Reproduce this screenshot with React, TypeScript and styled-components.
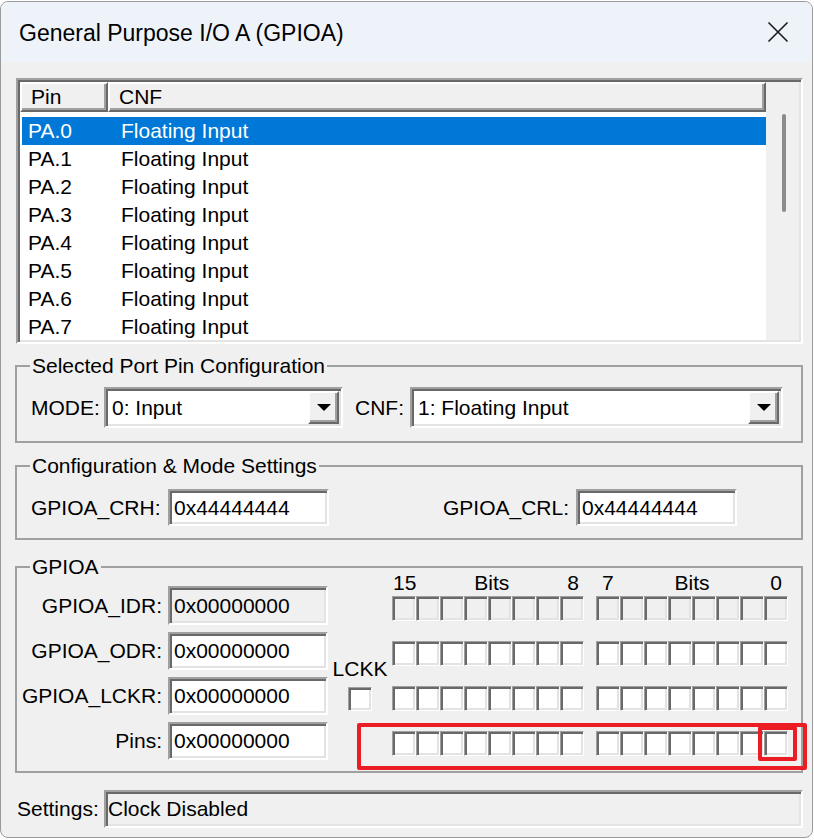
import React from "react";
import styled, { createGlobalStyle } from "styled-components";

const FONT = `"Liberation Sans", Arial, sans-serif`;

const GlobalStyle = createGlobalStyle`
  html, body { margin: 0; padding: 0; background: #ffffff; }
  body { font-family: ${FONT}; }
  * { box-sizing: border-box; }
`;

const Window = styled.div`
  position: relative;
  width: 813px;
  margin-top: 1px;
  border: 1px solid #9a9a9a;
  border-radius: 8px;
  overflow: hidden;
  background: #f0f0f0;
  font-family: ${FONT};
  font-size: 21px;
  color: #000;
`;

const TitleBar = styled.div`
  height: 60px;
  display: flex;
  align-items: center;
  justify-content: space-between;
  padding: 0 23px 0 18px;
  background: #eef3f9;
`;

const Title = styled.div`
  font-size: 23px;
  line-height: 28px;
  padding-top: 2px;
`;

const Body = styled.div`
  display: flex;
  flex-direction: column;
  padding: 16px 9px 9px 14px;
`;

/* ---------- list view ---------- */
const ListBox = styled.div`
  margin-left: 1px;
  height: 266px;
  border: 2px solid;
  border-color: #a0a0a0 #ffffff #ffffff #a0a0a0;
  box-shadow: inset 2px 2px 0 #696969, inset -2px -2px 0 #e3e3e3;
  padding: 2px;
  display: flex;
`;

const ListMain = styled.div`
  flex: 1;
  display: flex;
  flex-direction: column;
  background: #ffffff;
  overflow: hidden;
`;

const Header = styled.div`
  display: flex;
  height: 30px;
  flex: none;
`;

const HeaderCell = styled.div<{ $w?: number }>`
  ${(p) => (p.$w ? `width: ${p.$w}px; flex: none;` : `flex: 1;`)}
  height: 30px;
  background: #f0f0f0;
  border: 2px solid;
  border-color: #ffffff #696969 #696969 #ffffff;
  box-shadow: inset -2px -2px 0 #a0a0a0;
  padding-left: 9px;
  line-height: 25px;
`;

const Rows = styled.div`
  padding: 5px 0 0 2px;
`;

const Row = styled.div<{ $selected?: boolean }>`
  display: flex;
  width: 744px;
  height: 28px;
  line-height: 28px;
  background: ${(p) => (p.$selected ? "#0078d7" : "transparent")};
  color: ${(p) => (p.$selected ? "#ffffff" : "#000000")};
`;

const PinText = styled.div`
  width: 99px;
  padding-left: 6px;
  flex: none;
`;

const CnfText = styled.div`
  flex: 1;
`;

const ScrollTrack = styled.div`
  width: 33px;
  flex: none;
  background: #f0f0f0;
  padding: 32px 0 0 16px;
`;

const Thumb = styled.div`
  width: 4px;
  height: 98px;
  border-radius: 2px;
  background: #8b8b8b;
`;

/* ---------- group boxes ---------- */
const Group = styled.fieldset<{ $mt: number }>`
  margin: ${(p) => p.$mt}px 0 0 0;
  padding: 0;
  border: 2px solid #a0a0a0;
  min-width: 0;
`;

const Legend = styled.legend`
  margin-left: 13px;
  padding: 0 2px;
  line-height: 24px;
  font-size: 21px;
`;

const ConfigRow = styled.div`
  display: flex;
  align-items: center;
  padding: 9px 18px 13px 14px;
`;

const FieldLabel = styled.div<{ $w: number; $ml?: number }>`
  width: ${(p) => p.$w}px;
  margin-left: ${(p) => p.$ml ?? 0}px;
  flex: none;
  white-space: nowrap;
`;

const Select = styled.div<{ $w: number }>`
  width: ${(p) => p.$w}px;
  height: 41px;
  flex: none;
  display: flex;
  border: 2px solid;
  border-color: #a0a0a0 #ffffff #ffffff #a0a0a0;
  box-shadow: inset 2px 2px 0 #696969, inset -2px -2px 0 #e3e3e3;
  padding: 2px;
`;

const SelectText = styled.div`
  flex: 1;
  background: #ffffff;
  padding-left: 4px;
  line-height: 33px;
`;

const DropButton = styled.div`
  width: 31px;
  height: 33px;
  flex: none;
  background: #f0f0f0;
  border: 2px solid;
  border-color: #ffffff #696969 #696969 #ffffff;
  box-shadow: inset -2px -2px 0 #a0a0a0;
  display: flex;
  align-items: center;
  justify-content: center;
`;

const SettingsRow = styled.div`
  display: flex;
  align-items: center;
  padding: 11px 0 12px 14px;
`;

const Field = styled.div<{ $w: number; $h?: number; $grey?: boolean }>`
  width: ${(p) => p.$w}px;
  height: ${(p) => p.$h ?? 37}px;
  flex: none;
  border: 2px solid;
  border-color: #a0a0a0 #ffffff #ffffff #a0a0a0;
  box-shadow: inset 2px 2px 0 #696969, inset -2px -2px 0 #e3e3e3;
  background: ${(p) => (p.$grey ? "#f0f0f0" : "#ffffff")};
  padding-left: 4px;
  line-height: ${(p) => (p.$h ?? 37) - 4}px;
  white-space: nowrap;
`;

/* ---------- GPIOA register grid ---------- */
const RegGrid = styled.div`
  margin-top: -8px;
  display: grid;
  grid-template-columns: 151px 160px 64px 396px;
  grid-template-rows: 54px 38px 38px 38px;
  row-gap: 7px;
  padding-bottom: 11px;
`;

const RegLabel = styled.div<{ $row: number }>`
  grid-column: 1;
  grid-row: ${(p) => p.$row};
  align-self: end;
  text-align: right;
  padding-right: 6px;
  line-height: 38px;
  white-space: nowrap;
`;

const RegField = styled(Field)<{ $row: number }>`
  grid-column: 2;
  grid-row: ${(p) => p.$row};
  align-self: end;
`;

const LockColumn = styled.div`
  grid-column: 3;
  grid-row: 2 / 4;
  display: flex;
  flex-direction: column;
  align-items: center;
  justify-content: flex-end;
  padding-bottom: 4px;
`;

const LockLabel = styled.div`
  line-height: 24px;
  margin-bottom: 6px;
`;

const BitsCell = styled.div<{ $row: number }>`
  grid-column: 4;
  grid-row: ${(p) => p.$row};
  display: flex;
  flex-direction: column;
  justify-content: flex-end;
  padding-bottom: 4px;
`;

const BitHeaders = styled.div`
  display: flex;
  gap: 12px;
  margin-bottom: 1px;
`;

const BitHeader = styled.div<{ $pl: number; $pr: number }>`
  width: 192px;
  display: flex;
  justify-content: space-between;
  line-height: 24px;
  padding: 0 ${(p) => p.$pr}px 0 ${(p) => p.$pl}px;
`;

const BitRow = styled.div`
  display: flex;
  gap: 12px;
`;

const BitGroup = styled.div`
  display: flex;
`;

const Check = styled.div<{ $grey?: boolean }>`
  width: 24px;
  height: 25px;
  flex: none;
  border: 1px solid;
  border-color: #a0a0a0 #ffffff #ffffff #a0a0a0;
  box-shadow: inset 2px 2px 0 #696969, inset -2px -2px 0 #e3e3e3;
  background: ${(p) => (p.$grey ? "#f0f0f0" : "#ffffff")};
`;

const LockCheck = styled(Check)`
  height: 24px;
`;

/* ---------- status ---------- */
const StatusRow = styled.div`
  display: flex;
  align-items: center;
  margin-top: 17px;
`;

const StatusLabel = styled.div`
  width: 89px;
  flex: none;
  padding-left: 2px;
`;

const StatusField = styled.div`
  flex: 1;
  height: 38px;
  border: 2px solid;
  border-color: #a0a0a0 #ffffff #ffffff #a0a0a0;
  box-shadow: inset 2px 2px 0 #696969, inset -2px -2px 0 #e3e3e3;
  background: #f0f0f0;
  padding-left: 2px;
  line-height: 34px;
`;

/* ---------- annotation ---------- */
const Highlight = styled.div<{ $x: number; $y: number; $w: number; $h: number }>`
  position: absolute;
  left: ${(p) => p.$x}px;
  top: ${(p) => p.$y}px;
  width: ${(p) => p.$w}px;
  height: ${(p) => p.$h}px;
  border: 4px solid #ec1c24;
  border-radius: 2px;
  pointer-events: none;
`;

const CloseIcon = () => (
  <svg width="22" height="22" viewBox="0 0 22 22" aria-hidden>
    <path d="M1.5 1.5 L20.5 20.5 M20.5 1.5 L1.5 20.5" stroke="#1a1a1a" strokeWidth="1.6" fill="none" />
  </svg>
);

const Arrow = () => (
  <svg width="14" height="7" viewBox="0 0 14 7" aria-hidden>
    <polygon points="0,0 14,0 7,7" fill="#000" />
  </svg>
);

const pins = ["PA.0", "PA.1", "PA.2", "PA.3", "PA.4", "PA.5", "PA.6", "PA.7"];

const Bits = ({ grey }: { grey?: boolean }) => (
  <BitRow>
    {[0, 1].map((g) => (
      <BitGroup key={g}>
        {Array.from({ length: 8 }).map((_, i) => (
          <Check key={i} $grey={grey} />
        ))}
      </BitGroup>
    ))}
  </BitRow>
);

export default function App() {
  return (
    <>
      <GlobalStyle />
      <Window>
        <TitleBar>
          <Title>General Purpose I/O A (GPIOA)</Title>
          <CloseIcon />
        </TitleBar>
        <Body>
          <ListBox>
            <ListMain>
              <Header>
                <HeaderCell $w={88}>Pin</HeaderCell>
                <HeaderCell>CNF</HeaderCell>
              </Header>
              <Rows>
                {pins.map((p, i) => (
                  <Row key={p} $selected={i === 0}>
                    <PinText>{p}</PinText>
                    <CnfText>Floating Input</CnfText>
                  </Row>
                ))}
              </Rows>
            </ListMain>
            <ScrollTrack>
              <Thumb />
            </ScrollTrack>
          </ListBox>

          <Group $mt={10}>
            <Legend>Selected Port Pin Configuration</Legend>
            <ConfigRow>
              <FieldLabel $w={73}>MODE:</FieldLabel>
              <Select $w={239}>
                <SelectText>0: Input</SelectText>
                <DropButton>
                  <Arrow />
                </DropButton>
              </Select>
              <FieldLabel $w={55} $ml={12}>CNF:</FieldLabel>
              <Select $w={373}>
                <SelectText>1: Floating Input</SelectText>
                <DropButton>
                  <Arrow />
                </DropButton>
              </Select>
            </ConfigRow>
          </Group>

          <Group $mt={11}>
            <Legend>Configuration &amp; Mode Settings</Legend>
            <SettingsRow>
              <FieldLabel $w={137}>GPIOA_CRH:</FieldLabel>
              <Field $w={161}>0x44444444</Field>
              <FieldLabel $w={133} $ml={114}>GPIOA_CRL:</FieldLabel>
              <Field $w={161}>0x44444444</Field>
            </SettingsRow>
          </Group>

          <Group $mt={15}>
            <Legend>GPIOA</Legend>
            <RegGrid>
              <RegLabel $row={1}>GPIOA_IDR:</RegLabel>
              <RegField $row={1} $w={160} $h={39} $grey>0x00000000</RegField>
              <BitsCell $row={1}>
                <BitHeaders>
                  <BitHeader $pl={1} $pr={5}>
                    <span>15</span>
                    <span>Bits</span>
                    <span>8</span>
                  </BitHeader>
                  <BitHeader $pl={6} $pr={6}>
                    <span>7</span>
                    <span>Bits</span>
                    <span>0</span>
                  </BitHeader>
                </BitHeaders>
                <Bits grey />
              </BitsCell>

              <RegLabel $row={2}>GPIOA_ODR:</RegLabel>
              <RegField $row={2} $w={160} $h={38}>0x00000000</RegField>
              <BitsCell $row={2}>
                <Bits />
              </BitsCell>

              <LockColumn>
                <LockLabel>LCKK</LockLabel>
                <LockCheck />
              </LockColumn>

              <RegLabel $row={3}>GPIOA_LCKR:</RegLabel>
              <RegField $row={3} $w={160} $h={38}>0x00000000</RegField>
              <BitsCell $row={3}>
                <Bits />
              </BitsCell>

              <RegLabel $row={4}>Pins:</RegLabel>
              <RegField $row={4} $w={160} $h={38}>0x00000000</RegField>
              <BitsCell $row={4}>
                <Bits />
              </BitsCell>
            </RegGrid>
          </Group>

          <StatusRow>
            <StatusLabel>Settings:</StatusLabel>
            <StatusField>Clock Disabled</StatusField>
          </StatusRow>
        </Body>
        <Highlight $x={356} $y={721} $w={450} $h={47} />
        <Highlight $x={757} $y={724} $w={39} $h={35} />
      </Window>
    </>
  );
}
